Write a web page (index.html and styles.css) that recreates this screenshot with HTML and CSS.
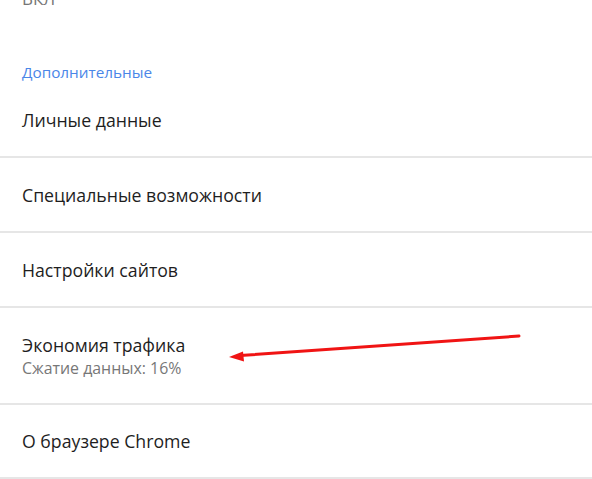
FILE: index.html
```html
<!DOCTYPE html>
<html lang="ru">
<head>
<meta charset="utf-8">
<link rel="stylesheet" href="styles.css">
</head>
<body>
<div class="screen">
  <div class="status">ВКЛ</div>
  <div class="section">Дополнительные</div>
  <div class="row r1"><div class="title">Личные данные</div></div>
  <div class="row"><div class="title">Специальные возможности</div></div>
  <div class="row"><div class="title">Настройки сайтов</div></div>
  <div class="row tall">
    <div class="title">Экономия трафика</div>
    <div class="sub">Сжатие данных: 16%</div>
  </div>
  <div class="row last"><div class="title">О браузере Chrome</div></div>
  <svg class="arrow" width="592" height="479" viewBox="0 0 592 479">
    <line x1="519" y1="336" x2="240" y2="355.5" stroke="#f01414" stroke-width="3" stroke-linecap="round"/>
    <polygon points="229,357 243,351.5 244,361.5" fill="#f01414"/>
  </svg>
</div>
</body>
</html>
```
FILE: styles.css
```css
html, body {
  margin: 0;
  padding: 0;
  background: #ffffff;
}
.screen {
  position: relative;
  width: 592px;
  height: 479px;
  overflow: hidden;
  font-family: "Open Sans", "Noto Sans", sans-serif;
  color: #212121;
}
.status {
  height: 0;
  margin-top: -12px;
  padding-left: 22px;
  font-size: 17px;
  line-height: 22px;
  color: #757575;
}
.section {
  padding: 72px 22px 0;
  height: 24px;
  line-height: 24px;
  font-size: 15.3px;
  color: #4a86e8;
  box-sizing: content-box;
}
.row {
  display: flex;
  flex-direction: column;
  justify-content: center;
  padding-left: 22px;
  height: 75px;
  box-sizing: border-box;
  border-bottom: 2px solid #e6e6e6;
}
.row.r1 {
  height: 74px;
}
.row.tall {
  height: 97px;
}
.row.last {
  height: 74px;
}
.title {
  font-size: 17.7px;
  line-height: 24px;
  color: #1e1e1e;
}
.sub {
  font-size: 15.9px;
  line-height: 22px;
  color: #777777;
}
.arrow {
  position: absolute;
  left: 0;
  top: 0;
  pointer-events: none;
}
```
